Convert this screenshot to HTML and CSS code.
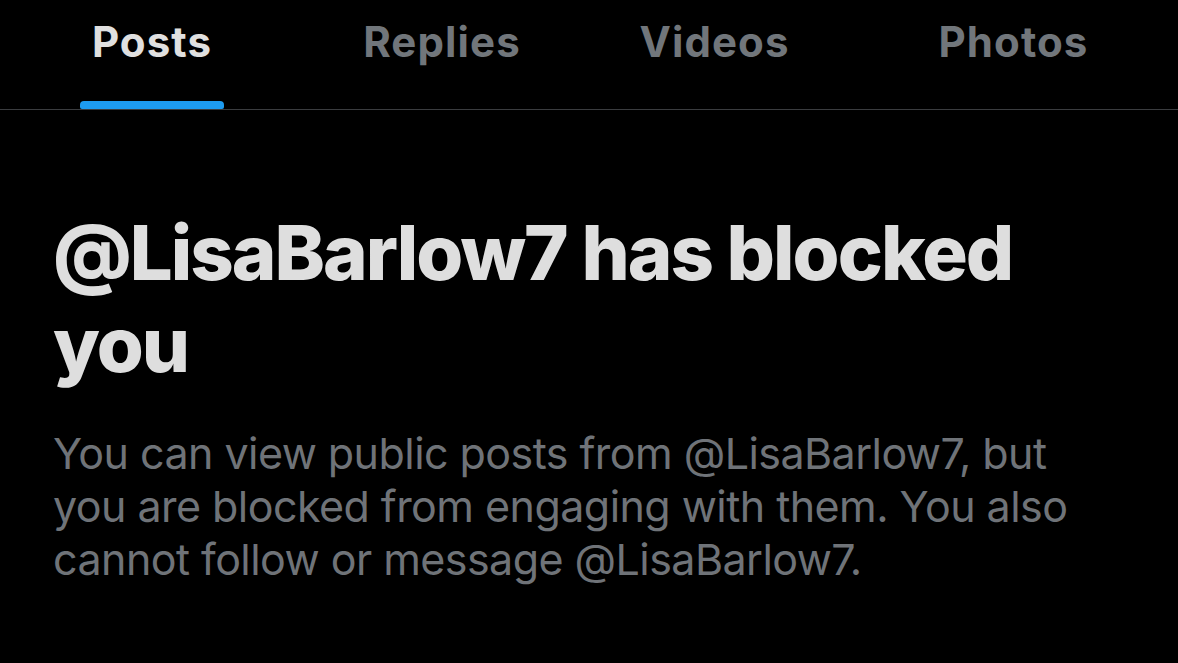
FILE: index.html
```html
<!DOCTYPE html>
<html lang="en">
<head>
    <meta charset="UTF-8">
    <title>Blocked</title>
    <link rel="stylesheet" href="styles.css">
</head>
<body>
    <nav class="tabs">
        <a class="tab active" href="#"><span class="label">Posts</span><span class="indicator"></span></a>
        <a class="tab" href="#"><span class="label">Replies</span></a>
        <a class="tab" href="#"><span class="label">Videos</span></a>
        <a class="tab" href="#"><span class="label">Photos</span></a>
    </nav>
    <main class="blocked">
        <h1>@LisaBarlow7 has blocked you</h1>
        <p>You can view public posts from @LisaBarlow7, but you are blocked from engaging with them. You also cannot follow or message @LisaBarlow7.</p>
    </main>
</body>
</html>
```

FILE: styles.css
```css
body {
    margin: 0;
    background: #000;
    font-family: 'Inter', 'Noto Sans', sans-serif;
    color: #e0e0e0;
    height: 663px;
    overflow: hidden;
}

.tabs {
    display: grid;
    grid-template-columns: 304px 276px 269px 1fr;
    height: 109px;
    border-bottom: 1px solid #3a3c3f;
}

.tab {
    display: flex;
    flex-direction: column;
    align-items: center;
    padding-top: 18px;
    text-decoration: none;
    color: #71767b;
    font-size: 42px;
    line-height: 48px;
    font-weight: 700;
    letter-spacing: 1.1px;
}

.tab.active {
    color: #e0e0e0;
}

.indicator {
    margin-top: auto;
    width: 144px;
    height: 8px;
    border-radius: 4px 4px 2px 2px;
    background: #1d9bf0;
}

.blocked {
    padding: 96px 52px 0 53px;
}

.blocked h1 {
    margin: 0;
    font-size: 76px;
    line-height: 92px;
    font-weight: 800;
    letter-spacing: -2px;
    color: #dedede;
    max-width: 1000px;
}

.blocked p {
    margin: 37px 0 0;
    font-size: 43px;
    line-height: 53px;
    font-weight: 400;
    color: #6f7378;
    max-width: 1040px;
    letter-spacing: -0.55px;
}
```
